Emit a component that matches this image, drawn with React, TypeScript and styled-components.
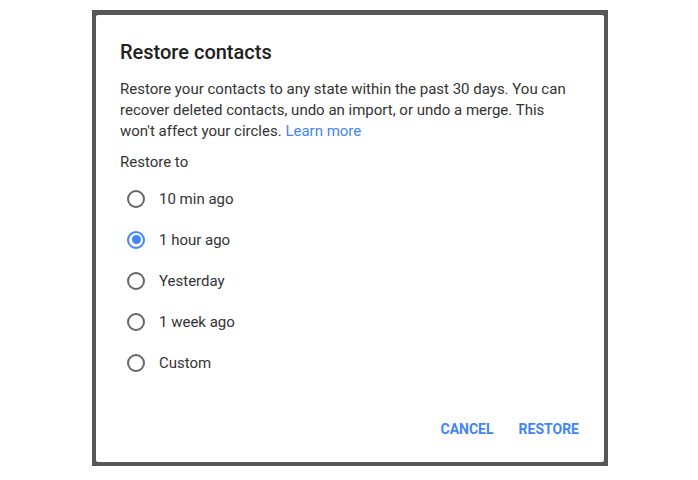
import { useState } from "react";
import styled, { createGlobalStyle } from "styled-components";

const GlobalStyle = createGlobalStyle`
  body {
    margin: 0;
    background: #ffffff;
    font-family: Roboto, "Liberation Sans", Arial, sans-serif;
  }
`;

// white page with the dimmed area in it
const Page = styled.div`
  width: 698px;
  height: 480px;
  padding-top: 10px;
  padding-left: 92px;
  box-sizing: border-box;
`;

// grey backdrop behind the dialog
const Backdrop = styled.div`
  width: 516px;
  height: 456px;
  background: #575757;
  padding: 5px 4px 4px 4px;
  box-sizing: border-box;
`;

const Dialog = styled.div`
  height: 100%;
  background: #ffffff;
  border-radius: 2px;
  padding: 24px 24px 17px 24px;
  box-sizing: border-box;
  display: flex;
  flex-direction: column;
`;

const Title = styled.h2`
  margin: 0 0 14px 0;
  font-size: 20px;
  font-weight: 500;
  line-height: 26px;
  color: #212121;
`;

const Description = styled.p`
  margin: 0;
  font-size: 15px;
  line-height: 21px;
  color: #333333;
`;

const Link = styled.a`
  color: #4285f4;
  text-decoration: none;
`;

const FieldLabel = styled.div`
  margin-top: 10px;
  font-size: 15px;
  line-height: 21px;
  color: #333333;
`;

const OptionList = styled.div`
  display: flex;
  flex-direction: column;
  margin-top: 5px;
`;

const OptionRow = styled.label`
  display: flex;
  align-items: center;
  gap: 14px;
  height: 41px;
  padding-left: 7px;
  font-size: 15px;
  color: #333333;
  cursor: pointer;
`;

const Radio = styled.span<{ $checked: boolean }>`
  width: 18px;
  height: 18px;
  border-radius: 50%;
  box-sizing: border-box;
  border: 2px solid ${(p) => (p.$checked ? "#4285f4" : "#666666")};
  display: flex;
  align-items: center;
  justify-content: center;

  &::after {
    content: "";
    width: 9px;
    height: 9px;
    border-radius: 50%;
    background: ${(p) => (p.$checked ? "#4285f4" : "transparent")};
  }
`;

// button row pinned to the bottom of the dialog
const Actions = styled.div`
  margin-top: auto;
  margin-right: -7px;
  display: flex;
  justify-content: flex-end;
  gap: 9px;
`;

const TextButton = styled.button`
  border: none;
  background: none;
  padding: 8px 8px;
  font-family: inherit;
  font-size: 14px;
  font-weight: 700;
  color: #4285f4;
  text-transform: uppercase;
  cursor: pointer;
`;

const options = ["10 min ago", "1 hour ago", "Yesterday", "1 week ago", "Custom"];

export default function App() {
  const [selected, setSelected] = useState("1 hour ago");

  return (
    <>
      <GlobalStyle />
      <Page>
        <Backdrop>
          <Dialog>
            <Title>Restore contacts</Title>
            <Description>
              Restore your contacts to any state within the past 30 days. You can
              recover deleted contacts, undo an import, or undo a merge. This
              won't affect your circles. <Link href="#">Learn more</Link>
            </Description>
            <FieldLabel>Restore to</FieldLabel>
            <OptionList>
              {options.map((o) => (
                <OptionRow key={o} onClick={() => setSelected(o)}>
                  <Radio $checked={selected === o} />
                  {o}
                </OptionRow>
              ))}
            </OptionList>
            <Actions>
              <TextButton>Cancel</TextButton>
              <TextButton>Restore</TextButton>
            </Actions>
          </Dialog>
        </Backdrop>
      </Page>
    </>
  );
}
